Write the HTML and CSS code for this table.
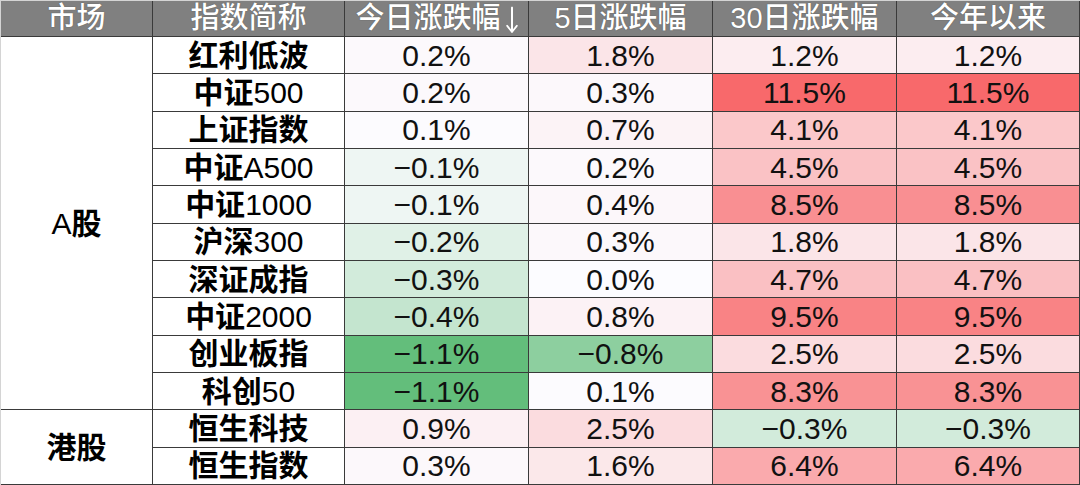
FILE: index.html
```html
<!DOCTYPE html>
<html lang="zh-CN">
<head>
<meta charset="utf-8">
<title>指数涨跌幅</title>
<link rel="stylesheet" href="styles.css">
</head>
<body>
<div class="table">
  <div class="th">市场</div>
  <div class="th">指数简称</div>
  <div class="th">今日涨跌幅<svg class="arrow" width="12" height="28" viewBox="0 0 12 28" aria-label="降序"><path d="M6 1.5V26M1.2 19.8L6 26L10.8 19.8" fill="none" stroke="#ffffff" stroke-width="2" stroke-linecap="round" stroke-linejoin="round"/></svg></div>
  <div class="th">5日涨跌幅</div>
  <div class="th">30日涨跌幅</div>
  <div class="th last">今年以来</div>

  <div class="market a-share"><span class="lat">A</span>股</div>
  <div class="name">红利低波</div>
  <div class="num" style="background:rgb(252,249,252)">0.2%</div>
  <div class="num" style="background:rgb(251,229,232)">1.8%</div>
  <div class="num" style="background:rgb(252,237,240)">1.2%</div>
  <div class="num last" style="background:rgb(252,237,240)">1.2%</div>

  <div class="name">中证<span class="lat">500</span></div>
  <div class="num" style="background:rgb(252,249,252)">0.2%</div>
  <div class="num" style="background:rgb(252,248,251)">0.3%</div>
  <div class="num" style="background:rgb(248,105,107)">11.5%</div>
  <div class="num last" style="background:rgb(248,105,107)">11.5%</div>

  <div class="name">上证指数</div>
  <div class="num" style="background:rgb(252,251,254)">0.1%</div>
  <div class="num" style="background:rgb(252,243,246)">0.7%</div>
  <div class="num" style="background:rgb(251,200,202)">4.1%</div>
  <div class="num last" style="background:rgb(251,200,202)">4.1%</div>

  <div class="name">中证<span class="lat">A500</span></div>
  <div class="num" style="background:rgb(238,246,243)">−0.1%</div>
  <div class="num" style="background:rgb(252,249,252)">0.2%</div>
  <div class="num" style="background:rgb(250,194,197)">4.5%</div>
  <div class="num last" style="background:rgb(250,194,197)">4.5%</div>

  <div class="name">中证<span class="lat">1000</span></div>
  <div class="num" style="background:rgb(238,246,243)">−0.1%</div>
  <div class="num" style="background:rgb(252,247,250)">0.4%</div>
  <div class="num" style="background:rgb(249,143,146)">8.5%</div>
  <div class="num last" style="background:rgb(249,143,146)">8.5%</div>

  <div class="name">沪深<span class="lat">300</span></div>
  <div class="num" style="background:rgb(224,241,231)">−0.2%</div>
  <div class="num" style="background:rgb(252,248,251)">0.3%</div>
  <div class="num" style="background:rgb(251,229,232)">1.8%</div>
  <div class="num last" style="background:rgb(251,229,232)">1.8%</div>

  <div class="name">深证成指</div>
  <div class="num" style="background:rgb(210,235,219)">−0.3%</div>
  <div class="num" style="background:rgb(252,252,255)">0.0%</div>
  <div class="num" style="background:rgb(250,192,195)">4.7%</div>
  <div class="num last" style="background:rgb(250,192,195)">4.7%</div>

  <div class="name">中证<span class="lat">2000</span></div>
  <div class="num" style="background:rgb(196,229,207)">−0.4%</div>
  <div class="num" style="background:rgb(252,242,245)">0.8%</div>
  <div class="num" style="background:rgb(249,131,133)">9.5%</div>
  <div class="num last" style="background:rgb(249,131,133)">9.5%</div>

  <div class="name">创业板指</div>
  <div class="num" style="background:rgb(99,190,123)">−1.1%</div>
  <div class="num" style="background:rgb(141,207,159)">−0.8%</div>
  <div class="num" style="background:rgb(251,220,223)">2.5%</div>
  <div class="num last" style="background:rgb(251,220,223)">2.5%</div>

  <div class="name">科创<span class="lat">50</span></div>
  <div class="num" style="background:rgb(99,190,123)">−1.1%</div>
  <div class="num" style="background:rgb(252,251,254)">0.1%</div>
  <div class="num" style="background:rgb(249,146,148)">8.3%</div>
  <div class="num last" style="background:rgb(249,146,148)">8.3%</div>

  <div class="market h-share">港股</div>
  <div class="name">恒生科技</div>
  <div class="num" style="background:rgb(252,240,243)">0.9%</div>
  <div class="num" style="background:rgb(251,220,223)">2.5%</div>
  <div class="num" style="background:rgb(210,235,219)">−0.3%</div>
  <div class="num last" style="background:rgb(210,235,219)">−0.3%</div>

  <div class="name">恒生指数</div>
  <div class="num" style="background:rgb(252,248,251)">0.3%</div>
  <div class="num" style="background:rgb(251,232,234)">1.6%</div>
  <div class="num" style="background:rgb(250,170,173)">6.4%</div>
  <div class="num last" style="background:rgb(250,170,173)">6.4%</div>
</div>
</body>
</html>
```

FILE: styles.css
```css
* {
  box-sizing: border-box;
}

html, body {
  margin: 0;
  padding: 0;
  background: #ffffff;
}

.table {
  width: 1080px;
  height: 485px;
  display: grid;
  grid-template-columns: 152px 192px 184px 184px 184px 183px;
  grid-template-rows: 36px repeat(12, 1fr);
  border-top: 1px solid #d4d4d4;
  border-left: 1px solid #d4d4d4;
  font-family: "Liberation Sans", "Noto Sans CJK SC", sans-serif;
  color: #000;
  line-height: 1.1;
}

.table > div {
  display: flex;
  align-items: center;
  justify-content: center;
  border-right: 1px solid #3a3a3a;
  border-bottom: 1px solid #3a3a3a;
  white-space: nowrap;
}

.th {
  background: #808080;
  color: #ffffff;
  font-size: 29px;
  font-weight: 500;
  text-shadow: 0 0 1px rgba(40, 40, 40, 0.7);
  padding-top: 1px;
}

.arrow {
  flex: none;
  margin-left: 5px;
  margin-top: 1px;
  filter: drop-shadow(0 0 0.6px rgba(40, 40, 40, 0.7));
}

.market {
  grid-column: 1;
  background: #ffffff;
  font-size: 30px;
  font-weight: 700;
}

.a-share {
  grid-row: 2 / span 10;
}

.h-share {
  grid-row: 12 / span 2;
}

.name {
  font-size: 30px;
  font-weight: 700;
  background: #ffffff;
}

.lat {
  font-weight: 400;
}

.num {
  font-size: 30px;
  font-weight: 400;
  color: #111;
}
```
